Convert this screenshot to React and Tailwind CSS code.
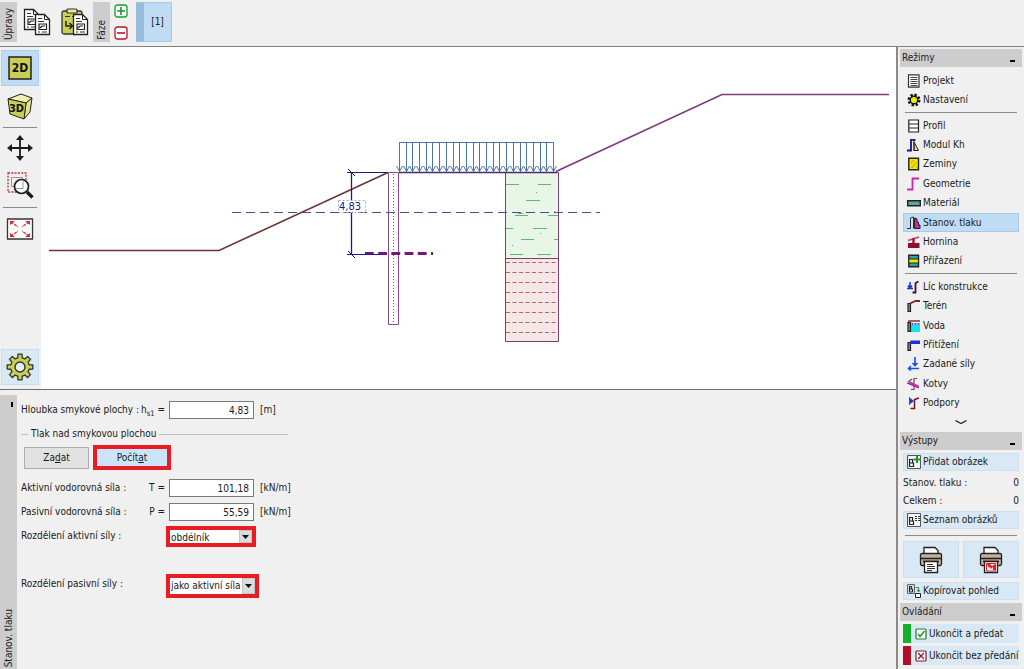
import React from 'react';

const Svg = ({ size = 14, children }) => (
  <svg
    width={size}
    height={size}
    viewBox={`0 0 ${size} ${size}`}
    fill="none"
    className="shrink-0"
    aria-hidden="true"
  >
    {children}
  </svg>
);

/* ---------- mode icons (14 x 14) ---------- */

const modeIcons = {
  projekt: (
    <>
      <path d="M1.500.800h10.500v12.400H1.500z" fill="#fff" stroke="#333" strokeWidth="1.200" />
      <path d="M3.500 3.500h7M3.500 5.500h7M3.500 7.500h7M3.500 9.500h7M3.500 11.500h7" stroke="#444" />
    </>
  ),
  nastaveni: (
    <>
      <circle cx="7" cy="7" r="5" stroke="#111" strokeWidth="3" strokeDasharray="2.2 1.7" />
      <circle cx="7" cy="7" r="3.800" fill="#f5e900" stroke="#111" strokeWidth="1.400" />
    </>
  ),
  profil: (
    <path d="M1.800 1h9.700v12H1.800zM1.800 5h9.700M1.800 9h9.700" fill="#fff" stroke="#222" strokeWidth="1.200" />
  ),
  modul: (
    <>
      <path d="M0 12.500h4V1.800h4.500" stroke="#14148c" strokeWidth="1.800" />
      <path d="M7 4v8.500h4.500z" fill="#f0e08a" stroke="#222" />
      <path d="M7 1v12" stroke="#222" />
    </>
  ),
  zeminy: (
    <>
      <path d="M1.800 1.200h9.700v11.600H1.800z" fill="#f2e200" stroke="#222" strokeWidth="1.400" />
      <path d="M4 6l3-3M5 11l4-6M4 11l1-1M9 11l1-1" stroke="#b5a900" />
    </>
  ),
  geometrie: <path d="M0 12.500h5.500v-11h6.500" stroke="#d321b4" strokeWidth="1.800" />,
  material: <path d="M.700 4.700h12.600v5H.700z" fill="#5aa79f" stroke="#222" strokeWidth="1.400" />,
  tlak: (
    <>
      <path d="M0 12.500h3.500V2l3-1v11.500" fill="#ddd" stroke="#333" />
      <path d="M7.500 2v10.500H13V9h-1.500V6H10V3z" fill="#d321b4" stroke="#222" />
    </>
  ),
  hornina: (
    <>
      <path d="M1 5.500l11-3.500" stroke="#d93667" strokeWidth="1.600" />
      <path d="M6.500 3v6" stroke="#a01535" strokeWidth="2.400" />
      <path d="M1 8h11.500v5H1z" fill="#8c1030" />
    </>
  ),
  prirazeni: (
    <>
      <path d="M1.800 1.200h9.700v11.600H1.800z" fill="#27a8a0" stroke="#222" strokeWidth="1.400" />
      <path d="M1.800 5h9.700v4H1.800z" fill="#f2e200" stroke="#222" />
    </>
  ),
  lic: (
    <>
      <path d="M5.500 12.500h3V3l3-1.500" stroke="#4b1414" strokeWidth="1.800" />
      <path d="M3 2v5M1 5.500l2 2.500 2-2.500M0 8.500h6" stroke="#1c2fd4" strokeWidth="1.500" />
    </>
  ),
  teren: (
    <>
      <path d="M1 4.500h2.500v8H1z" fill="#888" stroke="#222" strokeWidth="1.200" />
      <path d="M3 4.500L8.500 2H13" stroke="#8c2020" strokeWidth="1.800" />
    </>
  ),
  voda: (
    <>
      <path d="M4 6h9v7H4z" fill="#15e4ee" />
      <path d="M1 3.500h2.500v9H1z" fill="#888" stroke="#222" strokeWidth="1.200" />
      <path d="M1 2h12" stroke="#8c2020" strokeWidth="1.400" />
      <path d="M4.500 5h8" stroke="#1c2fd4" strokeWidth="1.500" strokeDasharray="2 1" />
    </>
  ),
  pritizeni: (
    <>
      <path d="M1 4.500h2.500v8H1z" fill="#888" stroke="#222" strokeWidth="1.200" />
      <path d="M2 4h1l1-2 1 1 1-1 1 1 1-1 1 1 1-1 1 1 1-1 1 1v3H3z" fill="#1c2fd4" />
    </>
  ),
  sily: (
    <path
      d="M8 0v8M5.500 6l2.500 2.500L10.500 6M12 11.500H2M4 9l-2.500 2.500L4 13.500"
      stroke="#1c4be0"
      strokeWidth="1.600"
    />
  ),
  kotvy: (
    <>
      <path d="M4 12.500h3V1.500h3M1 5l4-3" stroke="#555" strokeWidth="1.200" />
      <path d="M0 6l12 5" stroke="#222" />
      <path d="M2 5.500l9.500 4.500" stroke="#d321b4" strokeWidth="2.600" />
    </>
  ),
  podpory: (
    <>
      <path d="M3.500 12.500h4V3.500L12 2" stroke="#6b1a1a" strokeWidth="1.500" />
      <path d="M3 2l4 3-4 3z" fill="#1c2fd4" />
      <path d="M2.500 1v8" stroke="#555" />
    </>
  ),
};

const modeGroups = [
  {
    height: 'h-[39px]',
    items: [
      ['projekt', 'Projekt'],
      ['nastaveni', 'Nastavení'],
    ],
  },
  {
    height: 'h-[155px]',
    items: [
      ['profil', 'Profil'],
      ['modul', 'Modul Kh'],
      ['zeminy', 'Zeminy'],
      ['geometrie', 'Geometrie'],
      ['material', 'Materiál'],
      ['tlak', 'Stanov. tlaku'],
      ['hornina', 'Hornina'],
      ['prirazeni', 'Přiřazení'],
    ],
  },
  {
    height: 'h-[136px]',
    items: [
      ['lic', 'Líc konstrukce'],
      ['teren', 'Terén'],
      ['voda', 'Voda'],
      ['pritizeni', 'Přitížení'],
      ['sily', 'Zadané síly'],
      ['kotvy', 'Kotvy'],
      ['podpory', 'Podpory'],
    ],
  },
];

/* ---------- top bar ---------- */

function SheetShape({ x, y }) {
  return (
    <g transform={`translate(${x} ${y})`}>
      <path d="M.500.500h9l5 5v15H.500z" fill="#fff" stroke="#222" strokeWidth="1.300" />
      <path d="M9.500.500v5h5" stroke="#222" />
      <path d="M3 4.500h4M3 7.500h6M3 18h2M7 18h5" stroke="#333" strokeWidth="1.200" />
      <path d="M4 10h7.500v5.500H4zM5 14l2-2h3" stroke="#222" strokeWidth="1.200" />
    </g>
  );
}

function VerticalTab({ children }) {
  return (
    <div className="w-[17px] h-10 bg-[#cdcdcd] flex items-center justify-center rotate-180 [writing-mode:vertical-rl]">
      <span className="w-[17px] h-full leading-[17px] pt-0.5">{children}</span>
    </div>
  );
}

function TopBar() {
  return (
    <header className="h-[47px] pt-0.5 flex items-start border-b border-[#808080]">
      <VerticalTab>Úpravy</VerticalTab>
      <button aria-label="Kopírovat" className="ml-1.5 mt-1.5">
        <Svg size={28}>
          <SheetShape x={1} y={1} />
          <SheetShape x={12} y={6} />
        </Svg>
      </button>
      <button aria-label="Vložit" className="ml-2.5 mt-1.5">
        <Svg size={28}>
          <rect x="1" y="3" width="20" height="23" rx="2" fill="#c9cf55" stroke="#333" strokeWidth="1.300" />
          <rect x="6" y="1" width="10" height="4" rx="1" fill="#e8eaa0" stroke="#333" strokeWidth="1.200" />
          <path d="M4 8.500h5M11 8.500h3" stroke="#333" />
          <path d="M5 13v5h6M8.500 15l3 3-3 3" stroke="#222" strokeWidth="1.500" />
          <SheetShape x={12} y={6} />
        </Svg>
      </button>
      <div className="ml-[4px]">
        <VerticalTab>Fáze</VerticalTab>
      </div>
      <div className="ml-1 mt-0.5 flex flex-col gap-2">
        <button aria-label="Přidat fázi">
          <Svg>
            <rect x="1" y="1" width="12" height="12" rx="2.500" fill="#fff" stroke="#169b30" strokeWidth="1.300" />
            <path d="M7 3v8M3 7h8" stroke="#169b30" strokeWidth="1.600" />
          </Svg>
        </button>
        <button aria-label="Odebrat fázi">
          <Svg>
            <rect x="1" y="1" width="12" height="12" rx="2.500" fill="#fff" stroke="#b5152b" strokeWidth="1.300" />
            <path d="M3 7h8" stroke="#b5152b" strokeWidth="1.600" />
          </Svg>
        </button>
      </div>
      <button className="ml-2 w-9 h-10 bg-[#bfdcf4] border border-[#a5cbe9] border-l-8 border-l-[#98bcdb]">
        [1]
      </button>
    </header>
  );
}

/* ---------- left tool bar ---------- */

function ToolButton({ label, className = '', children }) {
  return (
    <button aria-label={label} className={`w-[38px] h-9 flex items-center justify-center ${className}`}>
      <Svg size={28}>{children}</Svg>
    </button>
  );
}

// outline of a toothed wheel centred on 14,14
const gearPath = (() => {
  const pts = [];
  for (let i = 0; i < 8; i += 1) {
    const base = (i * Math.PI) / 4;
    [[-0.24, 9.4], [-0.16, 13], [0.16, 13], [0.24, 9.4]].forEach(([da, r]) => {
      pts.push(`${(14 + r * Math.sin(base + da)).toFixed(2)} ${(14 - r * Math.cos(base + da)).toFixed(2)}`);
    });
  }
  return `M${pts.join('L')}z`;
})();

function ToolBar() {
  return (
    <nav className="w-[41px] shrink-0 pt-[3px] pb-1 pl-px flex flex-col">
      <ToolButton label="2D" className="bg-[#bfdcf4] border border-[#aed2ee]">
        <path d="M3 3h22v22H3z" fill="#c9cf55" stroke="#222" strokeWidth="1.500" />
        <text x="14" y="18" fontSize="12" fontWeight="bold" textAnchor="middle" fill="#111">2D</text>
      </ToolButton>
      <ToolButton label="3D" className="mt-0.5">
        <path d="M2 7l13-5 11 4-6 5z" fill="#eeefb0" stroke="#222" />
        <path d="M20 11l6-5-2 14-6 7z" fill="#e4e68e" stroke="#222" />
        <path d="M2 7l18 4-2 16-14-5z" fill="#c9cf55" stroke="#222" />
        <text x="10.500" y="20" fontSize="11" fontWeight="bold" textAnchor="middle" fill="#111">3D</text>
      </ToolButton>
      <hr className="mt-[3px] ml-0.5 w-[34px] border-[#8a8a8a]" />
      <ToolButton label="Posun" className="mt-0.5">
        <path d="M14 4v20M4 14h20" stroke="#1c1c1c" strokeWidth="1.800" />
        <path d="M14 1l4 5h-8zM14 27l4-5h-8zM1 14l5-4v8zM27 14l-5-4v8z" fill="#1c1c1c" />
      </ToolButton>
      <ToolButton label="Lupa" className="mt-0.5">
        <path d="M2 1h18v19H2z" stroke="#d42a3c" strokeWidth="1.300" strokeDasharray="2 1.300" />
        <path d="M5.500 5.500h11v9h-11z" stroke="#999" />
        <circle cx="15.500" cy="14.500" r="7" fill="#fff" stroke="#1c1c1c" strokeWidth="1.700" />
        <path d="M10 16.500h7V9" stroke="#999" />
        <path d="M21 20l5.500 5.500" stroke="#1c1c1c" strokeWidth="3.400" />
      </ToolButton>
      <hr className="mt-[3px] ml-0.5 w-[34px] border-[#8a8a8a]" />
      <ToolButton label="Zobrazit vše" className="mt-[3px]">
        <path d="M1.500 4h25v20h-25z" fill="#fff" stroke="#333" strokeWidth="1.300" />
        <path d="M5 7l7 5M23 7l-7 5M5 21l7-5M23 21l-7-5" stroke="#d42a3c" strokeWidth="1.300" strokeDasharray="3 1" />
        <path d="M4 6h5l-5 4zM24 6h-5l5 4zM4 22h5l-5-4zM24 22h-5l5-4z" fill="#d42a3c" />
      </ToolButton>
      <ToolButton label="Nastavení zobrazení" className="mt-auto bg-[#d9e8f5] border border-[#c3dcf0]">
        <path d={gearPath} fill="#c9cf55" stroke="#333" strokeWidth="1.300" strokeLinejoin="round" />
        <circle cx="14" cy="14" r="5" fill="#e4eef6" stroke="#333" strokeWidth="1.400" />
      </ToolButton>
    </nav>
  );
}

/* ---------- drawing ---------- */

const loadCount = 23;
const loadArrows = Array.from({ length: loadCount + 1 }, (_, i) => Math.round(399 + (154 * i) / loadCount) + 0.5);

// [x1, x2, y] of the clay hatch
const clay = [
  [506, 519, 184], [538, 551, 184], [526, 540, 200], [515, 528, 215], [548, 558, 215],
  [506, 513, 228], [533, 547, 228], [521, 534, 239], [554, 558, 239], [510, 523, 254], [537, 551, 254],
];
const rock = [262, 272, 282, 292, 302, 312, 322, 332];

function Drawing() {
  return (
    <svg viewBox="41 47 855 342" className="block flex-1 min-w-0 bg-white" fill="none" role="img" aria-label="Řez">
      <path d="M505.500 172.500h53v86h-53z" fill="#e8f6e8" />
      <path d="M505.500 258.500h53v83h-53z" fill="#f6e6e6" />
      {clay.map(([x1, x2, y]) => (
        <path key={`${x1}-${y}`} d={`M${x1} ${y + 0.5}H${x2}`} stroke="#62b868" />
      ))}
      <path d="M536 192.500h1M540 233.500h1M512 245.500h1M518 213.500h5M554 211.500h1" stroke="#62b868" />
      {rock.map((y) => (
        <path key={y} d={`M506 ${y + 0.5}H558`} stroke="#b5616e" strokeDasharray="4 2.500" />
      ))}
      <path d="M505.500 172.500h53v169h-53zM505.500 258.500h53" stroke="#7c3f72" />

      <path d="M388.500 172.500h10v152h-10z" stroke="#8a4a86" />
      <path d="M393.500 174v150" stroke="#8a4a86" strokeDasharray="1 2" />

      <path d="M49 250.500H219L388 172.500" stroke="#6e3434" strokeWidth="1.600" />
      <path d="M556 171.500L722 94.500H889" stroke="#7a3a7c" strokeWidth="1.600" />
      <path d="M399 172.500H557" stroke="#4a2a6a" strokeWidth="1.400" />

      <path d="M399 142.500H554" stroke="#4a75a5" />
      {loadArrows.map((x) => (
        <path key={x} d={`M${x} 142V172M${x - 3} 166L${x} 171.500L${x + 3} 166`} stroke="#4a75a5" />
      ))}

      <path d="M232 212.500H600" stroke="#4a4aa0" strokeDasharray="9 5" />
      <path d="M365 253.500H433" stroke="#7a127c" strokeWidth="3" strokeDasharray="8.800 4.400" />

      <g stroke="#1b1b82">
        <path d="M351.500 172V200M351.500 213V254" strokeWidth="1.300" />
        <path d="M347 172.500H388M347 254.500H380" />
        <path d="M348 169l7 7M348 251l7 7" />
      </g>
      <path d="M338.500 200.500h27v12h-27z" stroke="#a0a8c8" strokeDasharray="2 2" />
      <text x="339" y="210" fontSize="11" fill="#1b1b82">4,83</text>
    </svg>
  );
}

/* ---------- bottom form ---------- */

function ValueRow({ id, label, symbol, value, unit, className = '' }) {
  return (
    <div className={`h-[18px] flex items-center gap-1 ${className}`}>
      <label htmlFor={id} className="w-36 flex justify-between whitespace-nowrap">
        <span>{label}</span>
        <span>{symbol}</span>
      </label>
      <input
        id={id}
        type="text"
        defaultValue={value}
        className="w-[85px] h-[18px] px-1 text-right bg-white border border-[#7a7a7a] outline-none"
      />
      <span className="pl-0.5">{unit}</span>
    </div>
  );
}

function SelectRow({ id, label, value, className, boxClass }) {
  return (
    <div className={`flex items-start ${className}`}>
      <label htmlFor={id} className="w-[145px] mt-0.5 whitespace-nowrap">{label}</label>
      <div className={`relative flex border-4 border-[#e81c24] bg-white ${boxClass}`}>
        <select id={id} defaultValue={value} className="w-full appearance-none pl-px outline-none">
          <option>{value}</option>
        </select>
        <span className="absolute right-0 inset-y-0 w-[13px] bg-[#dcdcdc] border border-[#c4c4c4] flex items-center justify-center pointer-events-none">
          <svg width="7" height="4" viewBox="0 0 7 4" aria-hidden="true">
            <path d="M0 0h7L3.500 4z" fill="#111" />
          </svg>
        </span>
      </div>
    </div>
  );
}

function PressureForm() {
  return (
    <section className="flex-1 flex pt-[5px] border-t border-[#707070]">
      <div className="w-[17px] shrink-0 bg-[#cdcdcd] flex flex-col justify-between items-center">
        <span className="mt-[7px] ml-1.5 w-0.5 h-[5px] bg-black" />
        <span className="pt-0.5 leading-[17px] rotate-180 [writing-mode:vertical-rl]">Stanov. tlaku</span>
      </div>
      <form className="flex-1 pl-1 pt-1.5" onSubmit={(e) => e.preventDefault()}>
        <ValueRow
          id="depth"
          label="Hloubka smykové plochy :"
          symbol={<>h<sub className="bottom-[-3px]">s1</sub> =</>}
          value="4,83"
          unit="[m]"
        />
        <div className="mt-[7px] h-4 w-[267px] flex items-center gap-[3px]">
          <span className="w-[7px] h-px bg-[#bdbdbd]" />
          <span>Tlak nad smykovou plochou</span>
          <span className="flex-1 h-px bg-[#bdbdbd]" />
        </div>
        <div className="mt-[3px] ml-[3px] h-[25px] flex items-center gap-1">
          <button type="button" className="w-[65px] h-[22px] bg-[#e1e1e1] border border-[#adadad]">
            Za<u>d</u>at
          </button>
          <button type="button" className="w-[78px] h-[25px] bg-[#cce4f7] border-4 border-[#e81c24]">
            Počít<u>a</u>t
          </button>
        </div>
        <ValueRow id="active" className="mt-[9px]" label="Aktivní vodorovná síla :" symbol="T =" value="101,18" unit="[kN/m]" />
        <ValueRow id="passive" className="mt-1.5" label="Pasivní vodorovná síla :" symbol="P =" value="55,59" unit="[kN/m]" />
        <SelectRow id="activeShape" className="mt-[5px]" boxClass="w-[90px] h-[21px]" label="Rozdělení aktivní síly :" value="obdélník" />
        <SelectRow id="passiveShape" className="mt-[27px]" boxClass="w-[93px] h-6" label="Rozdělení pasivní síly :" value="jako aktivní síla" />
      </form>
    </section>
  );
}

/* ---------- right panel ---------- */

function PanelHeader({ children }) {
  return (
    <div className="ml-0.5 mr-0.5 h-[18px] pl-0.5 pr-[7px] flex items-center justify-between bg-[#cdcdcd]">
      <h2>{children}</h2>
      <button aria-label="Sbalit" className="mt-1.5 w-[5px] h-0.5 bg-black" />
    </div>
  );
}

function PictureIcon({ children }) {
  return (
    <Svg>
      <path d="M.500.500h13v13H.500z" fill="#f4f4f4" stroke="#555" />
      <path d="M2.500 4v7.500h4V8h-4M2.500 4.500h3V8" stroke="#222" strokeWidth="1.200" />
      {children}
    </Svg>
  );
}

function PrinterIcon({ children }) {
  return (
    <Svg size={28}>
      <path d="M7 9V1.500h11l3 3V9" fill="#fff" stroke="#222" strokeWidth="1.300" />
      <rect x="3.500" y="7.500" width="21" height="12" rx="1.500" fill="#c4b09c" stroke="#222" strokeWidth="1.300" />
      <path d="M4 12.500h20" stroke="#222" strokeWidth="1.600" />
      <path d="M6 15.500h16" stroke="#222" strokeWidth="1.600" />
      <path d="M7.500 15.500h13v11h-13z" fill="#fff" stroke="#222" strokeWidth="1.300" />
      {children}
    </Svg>
  );
}

const sideButton = 'w-full flex items-center gap-0.5 pl-[3px] bg-[#d9e8f5] border border-[#cde0f0] whitespace-nowrap';

function SidePanel() {
  return (
    <aside className="w-32 shrink-0 pt-0.5 border-l-2 border-[#8a8a8a]">
      <PanelHeader>Režimy</PanelHeader>
      <nav className="mt-1 pl-[5px] pr-[5px]">
        {modeGroups.map((group, i) => (
          <div key={group.height}>
            {i > 0 && <hr className="mt-0.5 mb-[3px] mx-0.5 border-[#8a8a8a]" />}
            <div className={`grid auto-rows-fr ${group.height}`}>
              {group.items.map(([key, text]) => (
                <button
                  key={key}
                  className={`flex items-center gap-0.5 pl-[3px] border whitespace-nowrap ${
                    key === 'tlak' ? 'bg-[#bfdcf4] border-[#a5cbe9]' : 'border-transparent'
                  }`}
                >
                  <Svg>{modeIcons[key]}</Svg>
                  {text}
                </button>
              ))}
            </div>
          </div>
        ))}
      </nav>
      <button aria-label="Další" className="w-full h-[19px] flex items-center justify-center">
        <svg width="12" height="5" viewBox="0 0 12 5" fill="none" aria-hidden="true">
          <path d="M.500.500L6 3.500 11.500.500" stroke="#222" strokeWidth="1.300" />
        </svg>
      </button>

      <PanelHeader>Výstupy</PanelHeader>
      <div className="mt-[3px] px-[5px]">
        <button className={`h-[18px] ${sideButton}`}>
          <PictureIcon>
            <path d="M10 1v7M6.500 4.500h7" stroke="#169b30" strokeWidth="2" />
          </PictureIcon>
          Přidat obrázek
        </button>
        <p className="mt-[3px] h-[18px] flex items-center justify-between">
          <span>Stanov. tlaku :</span>
          <span>0</span>
        </p>
        <p className="h-[18px] flex items-center justify-between">
          <span>Celkem :</span>
          <span>0</span>
        </p>
        <button className={`mt-px h-[18px] ${sideButton}`}>
          <PictureIcon>
            <path d="M8 3.500h5M8 5.500h5M8 7.500h5" stroke="#333" strokeWidth="1.200" strokeDasharray="2 1" />
          </PictureIcon>
          Seznam obrázků
        </button>
        <hr className="mt-1.5 mx-0.5 border-[#8a8a8a]" />
        <div className="mt-[5px] grid grid-cols-2 gap-1">
          <button aria-label="Tisk" className="h-[37px] flex items-center justify-center bg-[#d9e8f5] border border-[#cde0f0]">
            <PrinterIcon>
              <path d="M10 18.500h6M10 20.500h8M10 22.500h8M10 24.500h5" stroke="#333" />
            </PrinterIcon>
          </button>
          <button aria-label="Tisk obrázku" className="h-[37px] flex items-center justify-center bg-[#d9e8f5] border border-[#cde0f0]">
            <PrinterIcon>
              <path d="M9.500 17.500h9v7.500h-9z" fill="#fff" stroke="#e81c2c" />
              <path d="M10 18h3l2 2 3-2v6h-2v-3l-2 2-1-2-1 1z" fill="#e81c2c" />
            </PrinterIcon>
          </button>
        </div>
        <button className={`mt-1 h-[18px] ${sideButton}`}>
          <Svg>
            <path d="M.500.500h7v9h-7z" fill="#d4d4d4" stroke="#666" />
            <path d="M2.500 2v6h3V5h-3M2.500 2.500h2V5" stroke="#222" />
            <path d="M8.500 3.500h3v4M10 6l1.500 2L13 6" stroke="#169b30" />
            <path d="M8.500 9.500h5v4h-5z" fill="#fff" stroke="#222" />
          </Svg>
          Kopírovat pohled
        </button>
      </div>

      <div className="mt-[3px]">
        <PanelHeader>Ovládání</PanelHeader>
      </div>
      <div className="mt-[3px] px-[5px] flex flex-col gap-[3px]">
        <button className="h-[19px] pl-1 flex items-center gap-0.5 bg-[#d9e8f5] border-l-8 border-[#13b02c] whitespace-nowrap">
          <Svg size={12}>
            <rect x="1" y="1" width="10" height="10" rx="1" fill="#fff" stroke="#1d7a2c" strokeWidth="1.200" />
            <path d="M3 6l2 2.500L9.500 3" stroke="#1d9a2c" strokeWidth="1.500" />
          </Svg>
          Ukončit a předat
        </button>
        <button className="h-[19px] pl-1 flex items-center gap-0.5 bg-[#d9e8f5] border-l-8 border-[#b00f28] whitespace-nowrap">
          <Svg size={12}>
            <rect x="1" y="1" width="10" height="10" rx="1" fill="#fff" stroke="#7a1d2c" strokeWidth="1.200" />
            <path d="M3 3l6 6M9 3l-6 6" stroke="#8c1530" strokeWidth="1.300" />
          </Svg>
          Ukončit bez předání
        </button>
      </div>
    </aside>
  );
}

export default function App() {
  return (
    <div className="min-h-screen flex flex-col bg-[#f0f0f0] text-[#1a1a1a] text-[10px] leading-4 font-['DejaVu_Sans_Condensed','DejaVu_Sans',sans-serif]">
      <TopBar />
      <div className="flex-1 flex">
        <main className="flex-1 min-w-0 flex flex-col">
          <div className="flex">
            <ToolBar />
            <Drawing />
          </div>
          <PressureForm />
        </main>
        <SidePanel />
      </div>
    </div>
  );
}
